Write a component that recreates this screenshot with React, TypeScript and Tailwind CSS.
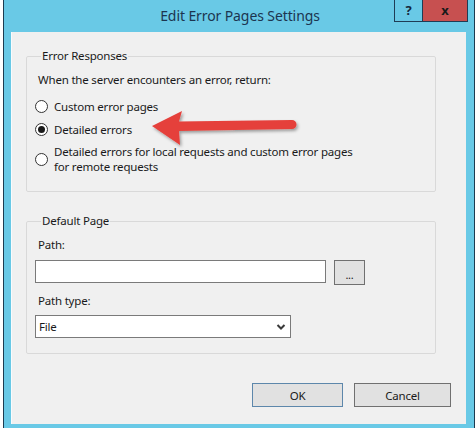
import React from "react";

const font = { fontFamily: '"Noto Sans", "Open Sans", sans-serif' };

const Radio = ({ checked }: { checked?: boolean }) => (
  <span className="flex h-[13px] w-[13px] shrink-0 items-center justify-center rounded-full border border-[#333333] bg-white">
    {checked && <span className="h-[7px] w-[7px] rounded-full bg-[#1a1a1a]" />}
  </span>
);

const RedArrow = () => (
  <svg
    className="pointer-events-none absolute left-[129px] top-[78px]"
    width="160"
    height="42"
    viewBox="141 110 160 42"
  >
    <defs>
      <filter id="sh" x="-10%" y="-30%" width="130%" height="180%">
        <feDropShadow dx="1.5" dy="2" stdDeviation="1.5" floodColor="#000" floodOpacity="0.35" />
      </filter>
    </defs>
    <path
      d="M152 126 L182 111 L179 121.5 L292 120 A4.5 4.5 0 0 1 292 129 L179 131 L180 145 Z"
      fill="#e5413b"
      filter="url(#sh)"
    />
  </svg>
);

export default function App() {
  return (
    <div className="flex h-[428px] w-[475px] overflow-hidden bg-white" style={font}>
      <div className="ml-[3px] flex h-full w-[472px] flex-col border-x border-[#1d3b50] bg-[#69c9e6]">
        {/* title bar */}
        <div className="relative flex h-[32px] shrink-0 items-center justify-center pl-[2px]">
          <span className="text-[14px] leading-[20px] tracking-[-0.1px] text-[#1c3550]">Edit Error Pages Settings</span>
          <div className="absolute right-[6px] top-0 flex h-[22px]">
            <div className="flex w-[29px] items-center justify-center border-x border-b border-[#1f3c55] text-[13px] font-bold text-[#14283c]">
              ?
            </div>
            <div className="flex w-[45px] items-center justify-center border-r border-b border-[#1f3c55] bg-[#c75050] text-[13px] font-bold text-[#1a1a1a]">
              x
            </div>
          </div>
        </div>

        {/* client area */}
        <div className="relative ml-[7px] flex h-[392px] w-[455px] flex-col border-l border-[#f8fbfd] bg-[#f0f0f0] pl-[14px] text-[11.5px] leading-[15px] tracking-[-0.2px] text-[#1a1a1a]">
          <fieldset className="mt-[16px] w-[410px] rounded-[2px] border border-[#d9d9d9] pb-[17px] pl-[8px]">
            <legend className="ml-[6px] px-[1px] leading-[16px]">Error Responses</legend>
            <div className="ml-[3px] mt-[8px]">When the server encounters an error, return:</div>
            <div className="mt-[12px] flex items-center gap-[6px]">
              <Radio />
              <span>Custom error pages</span>
            </div>
            <div className="mt-[8px] flex items-center gap-[6px]">
              <Radio checked />
              <span>Detailed errors</span>
            </div>
            <div className="mt-[7px] flex items-center gap-[6px]">
              <Radio />
              <div className="flex flex-col">
                <span>Detailed errors for local requests and custom error pages</span>
                <span>for remote requests</span>
              </div>
            </div>
          </fieldset>

          <fieldset className="mt-[21px] w-[410px] rounded-[2px] border border-[#d9d9d9] pb-[15px] pl-[8px]">
            <legend className="ml-[6px] px-[1px] leading-[16px]">Default Page</legend>
            <div className="ml-[3px] mt-[8px]">Path:</div>
            <div className="mt-[8px] flex items-start gap-[8px]">
              <div className="h-[23px] w-[291px] border border-[#7a7a7a] bg-white" />
              <div className="flex h-[25px] w-[31px] items-center justify-center border border-[#707070] bg-[#e1e1e1] pt-[3px] text-[11px] leading-none">
                ...
              </div>
            </div>
            <div className="ml-[3px] mt-[8px]">Path type:</div>
            <div className="mt-[7px] flex h-[23px] w-[256px] items-center justify-between border border-[#7a7a7a] bg-white pl-[3px] pr-[4px]">
              <span>File</span>
              <svg width="10" height="8" viewBox="0 0 10 8">
                <path d="M1.5 2 L5 5.5 L8.5 2" fill="none" stroke="#3a3a3a" strokeWidth="2" />
              </svg>
            </div>
          </fieldset>

          <div className="mt-[29px] flex justify-end gap-[11px] pr-[15px]">
            <div className="flex h-[24px] w-[91px] items-center justify-center border border-[#5d87ab] bg-[#e1e1e1]">
              OK
            </div>
            <div className="flex h-[24px] w-[97px] items-center justify-center border border-[#707070] bg-[#e1e1e1]">
              Cancel
            </div>
          </div>

          <RedArrow />
        </div>
        <div className="flex-1" />
      </div>
    </div>
  );
}
